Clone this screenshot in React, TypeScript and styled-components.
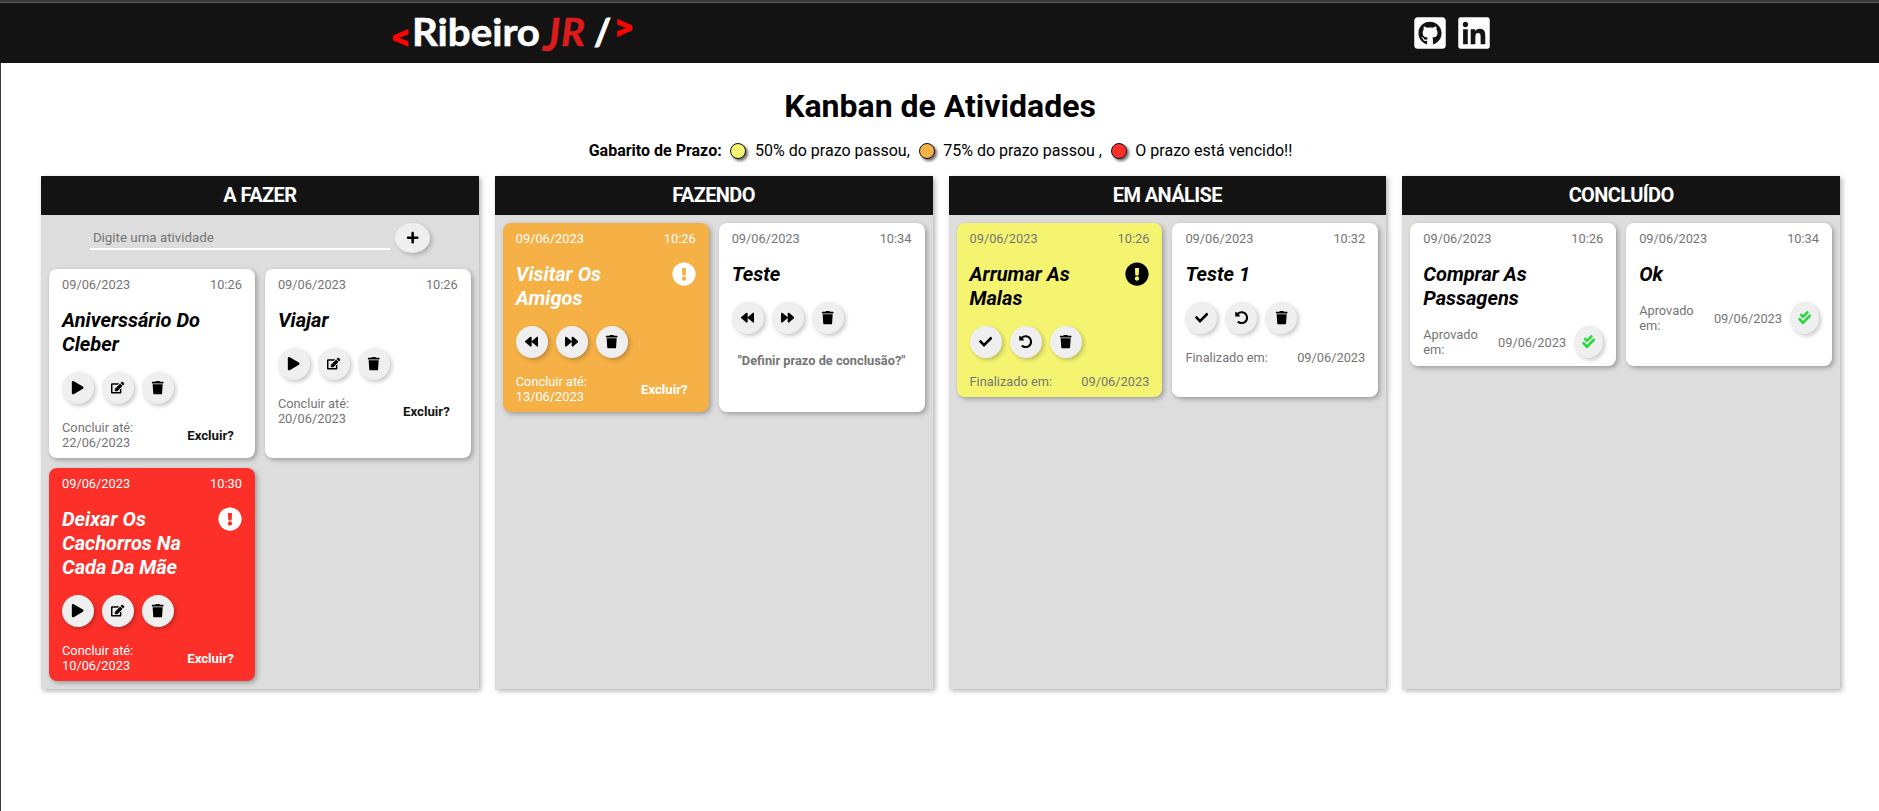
import React from "react";
import styled, { createGlobalStyle } from "styled-components";
import {
  FaBackward, FaCheck, FaCheckDouble, FaExclamationCircle, FaForward,
  FaGithubSquare, FaLinkedin, FaPlay, FaPlus, FaEdit, FaTrash, FaUndoAlt,
} from "react-icons/fa";

const GlobalStyle = createGlobalStyle`
  *, *::before, *::after { box-sizing: border-box; margin: 0; padding: 0; }
  body { margin: 0; background: #fff; color: #000; font-family: Roboto, sans-serif; font-size: 16px; }
  button, input { font-family: inherit; border: none; }
`;

const Page = styled.div`
  min-height: 811px;
  border-left: 1px solid #3c3c3c;
`;

const TopBar = styled.header`
  height: 63px;
  margin-left: -1px;
  border-top: 2px solid #373737;
  background: #131313;
  box-shadow: inset 0 1px 0 #5c5c5c;
  display: flex;
  align-items: center;
  justify-content: space-between;
  padding: 1px 387px 0 380px;
`;

const Logo = styled.svg`
  display: block;
  width: 268px;
  height: 50px;
  overflow: visible;
`;

const Social = styled.nav`
  display: flex;
  gap: 8px;
  color: #fff;
  svg { width: 36px; height: 36px; display: block; }
`;

const Title = styled.h1`
  margin-top: 24px;
  font-size: 32px;
  line-height: 38px;
  font-weight: 700;
  text-align: center;
`;

const Legend = styled.div`
  margin-top: 16px;
  height: 19px;
  display: flex;
  align-items: center;
  justify-content: center;
  gap: 8.7px;
  padding-left: 1px;
  line-height: 19px;
  white-space: pre;
`;

const Dot = styled.span<{ $color: string }>`
  width: 16px;
  height: 16px;
  border-radius: 50%;
  border: 1px solid #131313;
  background: ${(p) => p.$color};
  box-shadow: 2px 2px 3px rgba(0, 0, 0, 0.6);
`;

const Board = styled.main`
  display: grid;
  grid-template-columns: repeat(4, 1fr);
  gap: 16px;
  margin: 16px 39px 0 40px;
`;

const Column = styled.section`
  height: 513px;
  background: #ddd;
  box-shadow: 2px 2px 5px rgba(0, 0, 0, 0.3);
`;

const ColumnTitle = styled.h2`
  height: 39px;
  background: #131313;
  color: #fff;
  font-size: 20px;
  line-height: 39px;
  font-weight: 700;
  letter-spacing: -0.6px;
  text-align: center;
`;

const ColumnBody = styled.div`
  padding: 8px;
`;

const Form = styled.form`
  display: flex;
  align-items: center;
  justify-content: center;
  gap: 5px;
  margin-bottom: 16px;
`;

const TaskInput = styled.input`
  width: 300px;
  height: 24px;
  padding: 4px 3px;
  border-bottom: 2px solid #fff;
  background: transparent;
  font-size: 13.33px;
  outline: none;
  &::placeholder { color: #757575; }
`;

const RoundButton = styled.button<{ $w?: number; $h?: number; $color?: string }>`
  width: ${(p) => p.$w ?? 32}px;
  height: ${(p) => p.$h ?? 32}px;
  flex: none;
  border-radius: 50%;
  background: #efefef;
  color: ${(p) => p.$color ?? "#000"};
  box-shadow: 2px 2px 4px rgba(0, 0, 0, 0.22);
  display: flex;
  align-items: center;
  justify-content: center;
  font-size: 13.33px;
`;

const Cards = styled.div`
  display: grid;
  grid-template-columns: 1fr 1fr;
  gap: 10px;
`;

type Tone = "plain" | "half" | "late" | "over";
const tones: Record<Tone, { bg: string; title: string; text: string; action: string }> = {
  plain: { bg: "#fff", title: "#000", text: "#757575", action: "#131313" },
  half: { bg: "#f5f471", title: "#000", text: "#757575", action: "#131313" },
  late: { bg: "#f5b046", title: "#fff", text: "#fff", action: "#fff" },
  over: { bg: "#fc3029", title: "#fff", text: "#fff", action: "#fff" },
};

const CardBox = styled.article<{ $tone: Tone }>`
  display: flex;
  flex-direction: column;
  gap: 16px;
  padding: 8px 13px;
  border-radius: 8px;
  background: ${(p) => tones[p.$tone].bg};
  color: ${(p) => tones[p.$tone].text};
  box-shadow: 2px 2px 5px rgba(0, 0, 0, 0.3);
  font-size: 12.8px;
  line-height: 15px;
`;

const Between = styled.div`
  display: flex;
  align-items: center;
  justify-content: space-between;
`;

const TitleRow = styled.div<{ $tone: Tone }>`
  display: flex;
  align-items: flex-start;
  justify-content: space-between;
  color: ${(p) => tones[p.$tone].title};
  svg { width: 24px; height: 24px; flex: none; }
`;

const CardTitle = styled.h3`
  width: 150px;
  font-size: 20px;
  line-height: 24px;
  font-weight: 700;
  font-style: italic;
`;

const Actions = styled.div`
  display: flex;
  gap: 8px;
`;

const Due = styled.span`
  width: 76px;
`;

const Clear = styled.button<{ $tone: Tone }>`
  padding: 0 8px;
  background: none;
  color: ${(p) => tones[p.$tone].action};
  font-size: 13.2px;
  font-weight: 700;
`;

const DefineDue = styled.button`
  margin-top: 3px;
  align-self: center;
  background: none;
  color: #757575;
  font-size: 12.8px;
  line-height: 15px;
  font-weight: 700;
  white-space: nowrap;
`;

const ApprovedLabel = styled.span`
  width: 58px;
`;

const Approved = styled.span`
  display: flex;
  align-items: center;
  gap: 8px;
`;

type Task = { title: string; time: string; tone?: Tone; due?: string };

function Card({ task, icons, children }: { task: Task; icons?: React.ReactNode[]; children: React.ReactNode }) {
  const tone = task.tone ?? "plain";
  return (
    <CardBox $tone={tone}>
      <Between><span>09/06/2023</span><span>{task.time}</span></Between>
      <TitleRow $tone={tone}>
        <CardTitle>{task.title}</CardTitle>
        {tone !== "plain" && <FaExclamationCircle />}
      </TitleRow>
      {icons && <Actions>{icons.map((icon, i) => <RoundButton key={i}>{icon}</RoundButton>)}</Actions>}
      {children}
    </CardBox>
  );
}

function DueRow({ task }: { task: Task }) {
  return task.due ? (
    <Between>
      <Due>Concluir até: {task.due}</Due>
      <Clear $tone={task.tone ?? "plain"}>Excluir?</Clear>
    </Between>
  ) : (
    <DefineDue>"Definir prazo de conclusão?"</DefineDue>
  );
}

const todo: Task[] = [
  { title: "Aniverssário Do Cleber", time: "10:26", due: "22/06/2023" },
  { title: "Viajar", time: "10:26", due: "20/06/2023" },
  { title: "Deixar Os Cachorros Na Cada Da Mãe", time: "10:30", due: "10/06/2023", tone: "over" },
];
const doing: Task[] = [
  { title: "Visitar Os Amigos", time: "10:26", due: "13/06/2023", tone: "late" },
  { title: "Teste", time: "10:34" },
];
const review: Task[] = [
  { title: "Arrumar As Malas", time: "10:26", tone: "half" },
  { title: "Teste 1", time: "10:32" },
];
const done: Task[] = [
  { title: "Comprar As Passagens", time: "10:26" },
  { title: "Ok", time: "10:34" },
];

export default function App() {
  return (
    <Page>
      <GlobalStyle />
      <TopBar>
        <Logo viewBox="380 8 268 50" fontFamily="Lato, sans-serif" fontWeight="700">
          <text x="392" y="49" fontFamily="Roboto, sans-serif" fontWeight="900" fontSize="36" fill="#fb0500" textLength="18" lengthAdjust="spacingAndGlyphs">&lt;</text>
          <text x="412" y="46" fontSize="38" fill="#fff" stroke="#fff" strokeWidth="0.6" textLength="128" lengthAdjust="spacingAndGlyphs">Ribeiro</text>
          <text x="543" y="51" fontSize="45" fill="#dc1c1c" stroke="#dc1c1c" strokeWidth="0.5" fontStyle="italic" textLength="17" lengthAdjust="spacingAndGlyphs">J</text>
          <text x="561" y="46" fontSize="38" fill="#dc1c1c" stroke="#dc1c1c" strokeWidth="0.5" fontStyle="italic" textLength="24" lengthAdjust="spacingAndGlyphs">R</text>
          <text x="594" y="45" fontSize="36" fill="#fff" stroke="#fff" strokeWidth="1" textLength="17" lengthAdjust="spacingAndGlyphs">/</text>
          <text x="615" y="39" fontFamily="Roboto, sans-serif" fontWeight="900" fontSize="36" fill="#fb0500" textLength="18" lengthAdjust="spacingAndGlyphs">&gt;</text>
        </Logo>
        <Social><FaGithubSquare /><FaLinkedin /></Social>
      </TopBar>
      <Title>Kanban de Atividades</Title>
      <Legend>
        <strong>Gabarito de Prazo:</strong>
        <Dot $color="#f5f471" /><span>50% do prazo passou,</span>
        <Dot $color="#f5b046" /><span>75% do prazo passou ,</span>
        <Dot $color="#fc3029" /><span>O prazo está vencido!!</span>
      </Legend>
      <Board>
        <Column>
          <ColumnTitle>A FAZER</ColumnTitle>
          <ColumnBody>
            <Form>
              <TaskInput placeholder="Digite uma atividade" />
              <RoundButton type="button" $w={35} $h={30}><FaPlus /></RoundButton>
            </Form>
            <Cards>
              {todo.map((t) => (
                <Card key={t.title} task={t} icons={[<FaPlay />, <FaEdit />, <FaTrash />]}><DueRow task={t} /></Card>
              ))}
            </Cards>
          </ColumnBody>
        </Column>
        <Column>
          <ColumnTitle>FAZENDO</ColumnTitle>
          <ColumnBody>
            <Cards>
              {doing.map((t) => (
                <Card key={t.title} task={t} icons={[<FaBackward />, <FaForward />, <FaTrash />]}><DueRow task={t} /></Card>
              ))}
            </Cards>
          </ColumnBody>
        </Column>
        <Column>
          <ColumnTitle>EM ANÁLISE</ColumnTitle>
          <ColumnBody>
            <Cards>
              {review.map((t) => (
                <Card key={t.title} task={t} icons={[<FaCheck />, <FaUndoAlt />, <FaTrash />]}>
                  <Between><span>Finalizado em:</span><span>09/06/2023</span></Between>
                </Card>
              ))}
            </Cards>
          </ColumnBody>
        </Column>
        <Column>
          <ColumnTitle>CONCLUÍDO</ColumnTitle>
          <ColumnBody>
            <Cards>
              {done.map((t) => (
                <Card key={t.title} task={t}>
                  <Between>
                    <ApprovedLabel>Aprovado em:</ApprovedLabel>
                    <Approved>09/06/2023<RoundButton $w={29} $color="#2bd93f"><FaCheckDouble /></RoundButton></Approved>
                  </Between>
                </Card>
              ))}
            </Cards>
          </ColumnBody>
        </Column>
      </Board>
    </Page>
  );
}
